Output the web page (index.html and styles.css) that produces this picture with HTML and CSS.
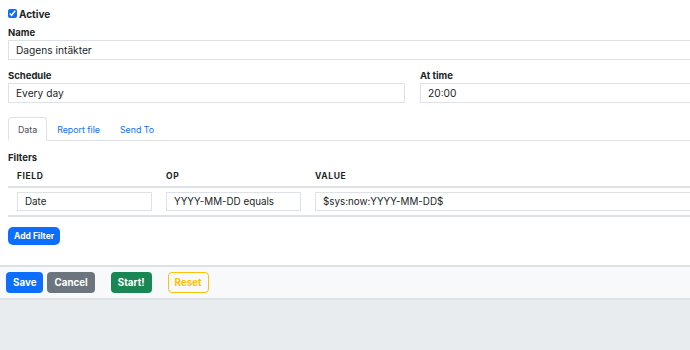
FILE: index.html
```html
<!DOCTYPE html>
<html lang="sv">
<head>
	<meta charset="UTF-8">
	<title>Rapport</title>
	<link rel="stylesheet" href="styles.css">
</head>
<body>
	<div class="page">
		<form class="report">
			<label class="check-row"><input type="checkbox" class="check" checked> Active</label>

			<div class="group">
				<label class="lbl">Name</label>
				<div class="field">Dagens intäkter</div>
			</div>

			<div class="cols">
				<div class="group">
					<label class="lbl">Schedule</label>
					<div class="field">Every day</div>
				</div>
				<div class="group">
					<label class="lbl">At time</label>
					<div class="field">20:00</div>
				</div>
			</div>

			<ul class="tabs">
				<li class="tab active">Data</li>
				<li class="tab">Report file</li>
				<li class="tab">Send To</li>
			</ul>

			<div class="lbl filters-lbl">Filters</div>
			<table class="filters">
				<colgroup>
					<col class="col-narrow">
					<col class="col-narrow">
					<col>
				</colgroup>
				<thead>
					<tr>
						<th>Field</th>
						<th>Op</th>
						<th>Value</th>
					</tr>
				</thead>
				<tbody>
					<tr>
						<td><div class="cell-input">Date</div></td>
						<td><div class="cell-input">YYYY-MM-DD equals</div></td>
						<td><div class="cell-input">$sys:now:YYYY-MM-DD$</div></td>
					</tr>
				</tbody>
			</table>

			<button type="button" class="btn btn-small btn-primary">Add Filter</button>
		</form>

		<div class="footer">
			<button type="button" class="btn btn-primary">Save</button>
			<button type="button" class="btn btn-secondary">Cancel</button>
			<button type="button" class="btn btn-success sep">Start!</button>
			<button type="button" class="btn btn-outline-warning sep">Reset</button>
		</div>
	</div>
</body>
</html>
```

FILE: styles.css
```css
* {
	margin: 0;
	padding: 0;
	box-sizing: border-box;
}
html, body {
	overflow: hidden;
}
body {
	background: #e9ecef;
	font-family: Inter, "Liberation Sans", sans-serif;
	color: #212529;
	height: 350px;
}
.page {
	width: 830px;
	background: #fff;
}
form.report {
	padding: 8px 8px 0 8px;
}
.check-row {
	display: flex;
	align-items: center;
	gap: 2px;
	height: 11px;
	font-size: 10px;
	font-weight: 700;
	margin-bottom: 8px;
}
.check {
	width: 9px;
	height: 9px;
	accent-color: #0d6efd;
}
.lbl {
	display: block;
	font-size: 9.5px;
	font-weight: 700;
	line-height: 11px;
	margin-bottom: 2px;
}
.group {
	margin-bottom: 10px;
}
.field {
	height: 20px;
	border: 1px solid #dee2e6;
	padding: 0 7px;
	font-size: 10.2px;
	line-height: 18px;
	color: #212529;
}
.cols {
	display: grid;
	grid-template-columns: 397px 1fr;
	gap: 15px;
	margin-bottom: 14px;
}
.cols .group {
	margin-bottom: 0;
}
ul.tabs {
	list-style: none;
	display: flex;
	border-bottom: 1px solid #dee2e6;
	height: 24px;
	margin-bottom: 11px;
}
.tab {
	padding: 0 9px;
	font-size: 8.8px;
	line-height: 23px;
	color: #0d6efd;
	border: 1px solid transparent;
	border-radius: 4px 4px 0 0;
}
.tab.active {
	color: #495057;
	border-color: #dee2e6;
	border-bottom-color: #fff;
	background: #fff;
	height: 24px;
}
.filters-lbl {
	margin-bottom: 2px;
}
table.filters {
	width: 100%;
	table-layout: fixed;
	border-collapse: collapse;
	margin-bottom: 10px;
}
.col-narrow {
	width: 149px;
}
table.filters th {
	text-align: left;
	text-transform: uppercase;
	font-size: 8.5px;
	font-weight: 700;
	letter-spacing: 0.6px;
	height: 22px;
	padding: 0 9px;
	border-bottom: 2px solid #dee2e6;
}
table.filters td {
	padding: 4px 5px 4px 9px;
	border-bottom: 2px solid #dee2e6;
}
.cell-input {
	height: 19px;
	border: 1px solid #dee2e6;
	padding: 0 7px;
	font-size: 9.8px;
	line-height: 17px;
}
.btn {
	border: 1px solid transparent;
	border-radius: 4px;
	font-family: Inter, "Liberation Sans", sans-serif;
	font-weight: 700;
	font-size: 9.8px;
	height: 21px;
	padding: 0 6px;
	color: #fff;
}
.btn-small {
	display: block;
	height: 18px;
	padding: 0 5px;
	font-size: 8.5px;
	border-radius: 5px;
}
.btn-primary {
	background: #0d6efd;
}
.btn-secondary {
	background: #6c757d;
}
.btn-success {
	background: #198754;
}
.btn-outline-warning {
	background: transparent;
	border-color: #ffc107;
	color: #ffc107;
}
.footer {
	margin-top: 20px;
	height: 35px;
	background: #f8f9fa;
	border-top: 2px solid #dee2e6;
	border-bottom: 2px solid #dee2e6;
	display: flex;
	align-items: center;
	gap: 4px;
	padding-left: 6px;
}
.footer .sep {
	margin-left: 12px;
}
```
